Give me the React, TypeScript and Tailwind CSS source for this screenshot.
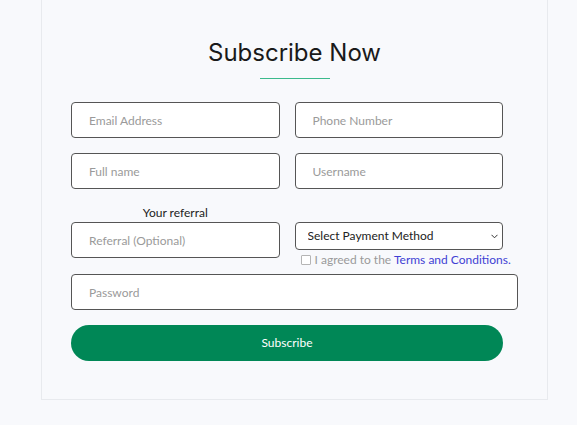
import React from 'react';

const inputCls =
  "h-9 w-full rounded border border-[#555] bg-white px-[17px] text-xs text-gray-800 outline-none placeholder:text-[#9a9a9a]";

export default function App() {
  return (
    <div className="min-h-[425px] w-[577px] bg-[#f8f9fc] font-['Lato',sans-serif]">
      <div className="ml-[41px] w-[507px] border-x border-b border-[#e8eaee] pb-[38px] pt-[37px]">
        <h2 className="text-center font-['Inter',sans-serif] text-[24px] leading-[32px] text-[#1a1a1a]">
          Subscribe Now
        </h2>
        <div className="mx-auto mt-[9px] h-px w-[70px] bg-[#3cba8c]" />

        <form className="mt-[23px] flex flex-col px-[29px]">
          <div className="flex w-[432px] gap-[15px]">
            <input className={inputCls} placeholder="Email Address" />
            <input className={inputCls} placeholder="Phone Number" />
          </div>
          <div className="mt-[15px] flex w-[432px] gap-[15px]">
            <input className={inputCls} placeholder="Full name" />
            <input className={inputCls} placeholder="Username" />
          </div>
          <div className="mt-[15px] flex h-[54px] w-[432px] gap-[15px]">
            <div className="flex min-w-0 flex-1 flex-col">
              <label className="text-center text-xs leading-[18px] text-[#222]">Your referral</label>
              <input className={inputCls} placeholder="Referral (Optional)" />
            </div>
            <div className="flex min-w-0 flex-1 flex-col pt-[18px]">
              <div className="relative">
                <select className="h-[28px] w-full appearance-none rounded border border-[#555] bg-white pl-3 text-xs font-normal text-[#222] outline-none">
                  <option>Select Payment Method</option>
                </select>
                <svg className="pointer-events-none absolute right-[5px] top-[12px]" width="7" height="5" viewBox="0 0 7 5">
                  <path d="M0.5 0.8 L3.5 3.8 L6.5 0.8" fill="none" stroke="#333" strokeWidth="1" />
                </svg>
              </div>
              <label className="mt-[2px] flex items-center gap-[4px] whitespace-nowrap pl-[6px] text-xs leading-[16px] text-[#9a9a9a]">
                <span className="inline-block h-[10px] w-[10px] shrink-0 rounded-[1px] border border-[#b5b5b5] bg-white" />
                <span>
                  I agreed to the <a className="text-[#3f3fd4]">Terms and Conditions.</a>
                </span>
              </label>
            </div>
          </div>
          <div className="mt-[16px] w-[447px]">
            <input className={inputCls} type="password" placeholder="Password" />
          </div>
          <button
            type="button"
            className="mt-[15px] h-9 w-[432px] rounded-full bg-[#008756] text-xs text-white"
          >
            Subscribe
          </button>
        </form>
      </div>
    </div>
  );
}
